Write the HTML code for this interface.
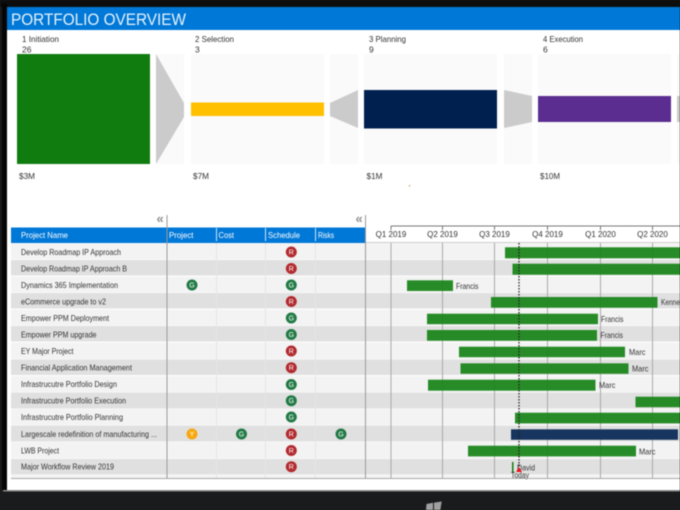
<!DOCTYPE html>
<html><head><meta charset="utf-8"><style>
html,body{margin:0;padding:0;background:#1a1b1d;width:680px;height:510px;overflow:hidden}
svg{display:block;filter:blur(.5px)}
text{font-family:"Liberation Sans",sans-serif;font-size:8.5px;fill:#333}
.h{fill:#fff}
.c{fill:#fff;font-size:7px;text-anchor:middle}
.q{text-anchor:middle;fill:#333;font-size:8px}
</style></head><body>
<svg width="680" height="510" viewBox="0 0 680 510" xmlns="http://www.w3.org/2000/svg">
<rect width="680" height="510" fill="#1a1b1d"/>
<rect x="0" y="0" width="680" height="7" fill="#0d0d0e"/>
<rect x="2" y="3" width="5" height="487" fill="#050505"/>
<rect x="7" y="7" width="673" height="483.500" fill="#fff"/>
<rect x="3" y="490" width="677" height="1.500" fill="#8a8a8a"/>
<rect x="7" y="7" width="673" height="23" fill="#0078d7"/>
<text x="11" y="25" style="font-size:17px;fill:#e6f2fb" textLength="175" lengthAdjust="spacingAndGlyphs">PORTFOLIO OVERVIEW</text>

<text x="22" y="42" textLength="37" lengthAdjust="spacingAndGlyphs">1 Initiation</text>
<text x="22" y="52.500">26</text>
<text x="195" y="42" textLength="39" lengthAdjust="spacingAndGlyphs">2 Selection</text>
<text x="195" y="52.500">3</text>
<text x="369" y="42" textLength="37" lengthAdjust="spacingAndGlyphs">3 Planning</text>
<text x="369" y="52.500">9</text>
<text x="543" y="42" textLength="40" lengthAdjust="spacingAndGlyphs">4 Execution</text>
<text x="543" y="52.500">6</text>

<rect x="17" y="54" width="133" height="110" fill="#107c10"/>
<rect x="156" y="54" width="28" height="110" fill="#fafafa"/>
<polygon points="156,54 184,103 184,117 156,164" fill="#cbcbcb"/>
<rect x="191" y="54" width="133" height="110" fill="#fafafa"/>
<rect x="191" y="102.500" width="133" height="13.500" fill="#ffc000"/>
<rect x="330" y="54" width="28" height="110" fill="#fafafa"/>
<polygon points="330,103 330,116 358,128 358,90" fill="#cbcbcb"/>
<rect x="364" y="54" width="133" height="110" fill="#fafafa"/>
<rect x="364" y="90" width="133" height="38.500" fill="#002050"/>
<rect x="504" y="54" width="28" height="110" fill="#fafafa"/>
<polygon points="504,90 532,96 532,122 504,128" fill="#cbcbcb"/>
<rect x="538" y="54" width="133" height="110" fill="#fafafa"/>
<rect x="538" y="96" width="133" height="26" fill="#5c2d91"/>
<rect x="677" y="54" width="3" height="110" fill="#fafafa"/>
<polygon points="677,96 680,96 680,122 677,122" fill="#cbcbcb"/>

<text x="19" y="179" textLength="16" lengthAdjust="spacingAndGlyphs">$3M</text>
<text x="193" y="179" textLength="16" lengthAdjust="spacingAndGlyphs">$7M</text>
<text x="366.500" y="179" textLength="16" lengthAdjust="spacingAndGlyphs">$1M</text>
<text x="540" y="179" textLength="20" lengthAdjust="spacingAndGlyphs">$10M</text>
<rect x="409" y="185" width="1" height="1.500" fill="#c98a5a"/>

<text x="156.500" y="223" style="font-size:13px;fill:#8f8f8f;font-weight:bold">«</text>
<text x="355.500" y="223" style="font-size:13px;fill:#8f8f8f;font-weight:bold">«</text>

<g>
<rect x="11" y="243.300" width="669" height="16" fill="#f3f3f3"/>
<rect x="11" y="260" width="669" height="15.500" fill="#e0e0e0"/>
<rect x="11" y="276.500" width="669" height="16" fill="#f3f3f3"/>
<rect x="11" y="293" width="669" height="15.500" fill="#e0e0e0"/>
<rect x="11" y="309.500" width="669" height="16" fill="#f3f3f3"/>
<rect x="11" y="326" width="669" height="15.500" fill="#e0e0e0"/>
<rect x="11" y="342.500" width="669" height="16.500" fill="#f3f3f3"/>
<rect x="11" y="359.500" width="669" height="15.500" fill="#e0e0e0"/>
<rect x="11" y="376" width="669" height="16" fill="#f3f3f3"/>
<rect x="11" y="392.500" width="669" height="16" fill="#e0e0e0"/>
<rect x="11" y="409" width="669" height="16" fill="#f3f3f3"/>
<rect x="11" y="425.500" width="669" height="16" fill="#e0e0e0"/>
<rect x="11" y="442" width="669" height="16.500" fill="#f3f3f3"/>
<rect x="11" y="459" width="669" height="15.500" fill="#e0e0e0"/>
<rect x="11" y="475" width="669" height="3" fill="#f3f3f3"/>
</g>
<g stroke="#e6e6e6" stroke-width="1">
<path d="M216.500 243V478M265.500 243V478M315.500 243V478"/>
</g>

<rect x="11" y="227.500" width="155.500" height="15.500" fill="#0078d7"/>
<rect x="167" y="227.500" width="198" height="15.500" fill="#0078d7"/>
<path d="M216.500 228V241M265.500 228V241M315.500 228V241" stroke="#cfe5f7" stroke-width="1"/>
<text class="h" x="21" y="238" textLength="47" lengthAdjust="spacingAndGlyphs">Project Name</text>
<text class="h" x="169" y="238" textLength="24.500" lengthAdjust="spacingAndGlyphs">Project</text>
<text class="h" x="218.500" y="238" textLength="15.500" lengthAdjust="spacingAndGlyphs">Cost</text>
<text class="h" x="268" y="238" textLength="32" lengthAdjust="spacingAndGlyphs">Schedule</text>
<text class="h" x="318" y="238" textLength="16" lengthAdjust="spacingAndGlyphs">Risks</text>

<g stroke="#aaa" stroke-width="1" fill="none">
<path d="M391 243V478M442.500 243V478M494.500 243V478M547.500 243V478M600.500 243V478M652.500 243V478" stroke-width="1"/>
</g>
<path d="M391 226H680M391 226V230M442.500 226V230M494.500 226V230M547.500 226V230M600.500 226V230M652.500 226V230" stroke="#777" stroke-width="1" fill="none"/>
<path d="M366 242.500H680" stroke="#ccc" stroke-width="1"/>
<text class="q" x="391" y="237">Q1 2019</text>
<text class="q" x="442.500" y="237">Q2 2019</text>
<text class="q" x="494.500" y="237">Q3 2019</text>
<text class="q" x="547.500" y="237">Q4 2019</text>
<text class="q" x="600.500" y="237">Q1 2020</text>
<text class="q" x="652.500" y="237">Q2 2020</text>

<g>
<text x="21" y="255" textLength="100" lengthAdjust="spacingAndGlyphs">Develop Roadmap IP Approach</text>
<text x="21" y="271.500" textLength="106" lengthAdjust="spacingAndGlyphs">Develop Roadmap IP Approach B</text>
<text x="21" y="288" textLength="97" lengthAdjust="spacingAndGlyphs">Dynamics 365 Implementation</text>
<text x="21" y="304.500" textLength="85" lengthAdjust="spacingAndGlyphs">eCommerce upgrade to v2</text>
<text x="21" y="321" textLength="88" lengthAdjust="spacingAndGlyphs">Empower PPM Deployment</text>
<text x="21" y="337.500" textLength="75.500" lengthAdjust="spacingAndGlyphs">Empower PPM upgrade</text>
<text x="21" y="354" textLength="52.500" lengthAdjust="spacingAndGlyphs">EY Major Project</text>
<text x="21" y="370.700" textLength="111" lengthAdjust="spacingAndGlyphs">Financial Application Management</text>
<text x="21" y="387.200" textLength="96" lengthAdjust="spacingAndGlyphs">Infrastrucutre Portfolio Design</text>
<text x="21" y="403.700" textLength="105" lengthAdjust="spacingAndGlyphs">Infrastrucutre Portfolio Execution</text>
<text x="21" y="420.200" textLength="102" lengthAdjust="spacingAndGlyphs">Infrastrucutre Portfolio Planning</text>
<text x="21" y="437" textLength="136" lengthAdjust="spacingAndGlyphs">Largescale redefinition of manufacturing ...</text>
<text x="21" y="453.500" textLength="38" lengthAdjust="spacingAndGlyphs">LWB Project</text>
<text x="21" y="469.700" textLength="93" lengthAdjust="spacingAndGlyphs">Major Workflow Review 2019</text>
</g>

<g fill="#b22a2e">
<circle cx="291.300" cy="252" r="5.500"/><circle cx="291.300" cy="268.500" r="5.500"/><circle cx="291.300" cy="301.500" r="5.500"/><circle cx="291.300" cy="351" r="5.500"/><circle cx="291.300" cy="367.700" r="5.500"/><circle cx="291.300" cy="434" r="5.500"/><circle cx="291.300" cy="450.500" r="5.500"/><circle cx="291.300" cy="466.700" r="5.500"/>
</g>
<g fill="#217a45">
<circle cx="291.300" cy="285" r="5.500"/><circle cx="291.300" cy="318" r="5.500"/><circle cx="291.300" cy="334.500" r="5.500"/><circle cx="291.300" cy="384.500" r="5.500"/><circle cx="291.300" cy="400.700" r="5.500"/><circle cx="291.300" cy="417" r="5.500"/>
<circle cx="192" cy="285" r="5.500"/><circle cx="241.500" cy="434" r="5.500"/><circle cx="341" cy="434" r="5.500"/>
</g>
<circle cx="192" cy="434" r="5.500" fill="#f7a70f"/>
<g>
<text class="c" x="291.300" y="254.500">R</text><text class="c" x="291.300" y="271">R</text><text class="c" x="291.300" y="287.500">G</text><text class="c" x="291.300" y="304">R</text><text class="c" x="291.300" y="320.500">G</text><text class="c" x="291.300" y="337">G</text><text class="c" x="291.300" y="353.500">R</text><text class="c" x="291.300" y="370.200">R</text><text class="c" x="291.300" y="387">G</text><text class="c" x="291.300" y="403.200">G</text><text class="c" x="291.300" y="419.500">G</text><text class="c" x="291.300" y="436.500">R</text><text class="c" x="291.300" y="453">R</text><text class="c" x="291.300" y="469.200">R</text>
<text class="c" x="192" y="287.500">G</text><text class="c" x="192" y="436.500">Y</text><text class="c" x="241.500" y="436.500">G</text><text class="c" x="341" y="436.500">G</text>
</g>

<g fill="#1a851a" fill-opacity=".94">
<rect x="505" y="247.300" width="175" height="11"/>
<rect x="512.500" y="263.700" width="167.500" height="11"/>
<rect x="407" y="280.300" width="46" height="10.700"/>
<rect x="491" y="297" width="166.500" height="10.700"/>
<rect x="427" y="313.700" width="171" height="10.500"/>
<rect x="427" y="330" width="170" height="10.700"/>
<rect x="459" y="346.700" width="166" height="10.500"/>
<rect x="460.500" y="363.300" width="168" height="10.500"/>
<rect x="428" y="379.700" width="167.500" height="11"/>
<rect x="635.500" y="396.700" width="44.500" height="10.500"/>
<rect x="515" y="412.700" width="165" height="10.700"/>
<rect x="468" y="445.700" width="168" height="10.700"/>
<rect x="512" y="462" width="1.500" height="11" fill="#107c10" fill-opacity="1"/>
</g>
<rect x="511" y="429.300" width="167" height="10.500" fill="#17355f"/>

<text x="456" y="289" textLength="22.500" lengthAdjust="spacingAndGlyphs">Francis</text>
<text x="661" y="305" textLength="19" lengthAdjust="spacingAndGlyphs">Kenne</text>
<text x="601" y="322" textLength="22.500" lengthAdjust="spacingAndGlyphs">Francis</text>
<text x="600.500" y="338" textLength="22.500" lengthAdjust="spacingAndGlyphs">Francis</text>
<text x="629" y="355" textLength="16.500" lengthAdjust="spacingAndGlyphs">Marc</text>
<text x="632" y="371.500" textLength="16.500" lengthAdjust="spacingAndGlyphs">Marc</text>
<text x="599" y="388" textLength="16.500" lengthAdjust="spacingAndGlyphs">Marc</text>
<text x="639" y="454.500" textLength="16.500" lengthAdjust="spacingAndGlyphs">Marc</text>
<text x="517" y="470.500" textLength="18" lengthAdjust="spacingAndGlyphs">David</text>

<path d="M519 243V470" stroke="#222" stroke-width="1.300" stroke-dasharray="1.500 1.500" fill="none"/>
<polygon points="519,467 522,472 516,472" fill="#e8121b"/>
<text x="511" y="478" style="font-size:8px" textLength="18" lengthAdjust="spacingAndGlyphs">Today</text>

<path d="M167 215V478M365.500 215V478" stroke="#9a9a9a" stroke-width="1" fill="none"/>
<rect x="11" y="478" width="669" height="1" fill="#a8a8a8"/>

<g fill="#a0a0a0">
<polygon points="426.500,504 433,502.800 433,510 426,510"/>
<polygon points="434,502.600 441.700,501.500 440.300,510 434,510"/>
</g>
</svg>
</body></html>
